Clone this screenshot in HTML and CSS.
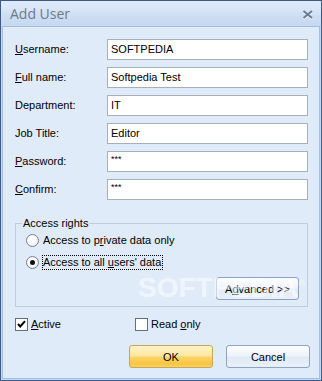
FILE: index.html
```html
<!DOCTYPE html>
<html>
<head>
<meta charset="utf-8">
<link rel="stylesheet" href="styles.css">
</head>
<body>
<div class="window">
  <div class="titlebar">
    <span class="title">Add User</span>
    <svg class="close" width="12" height="10" viewBox="0 0 12 10">
      <path d="M1.5 2 L10 9 M10 2 L1.5 9" stroke="#ffffff" stroke-width="2" fill="none" opacity="0.7"/>
      <path d="M1.5 1 L10 8 M10 1 L1.5 8" stroke="#6c7c93" stroke-width="2" fill="none"/>
    </svg>
  </div>
  <div class="client">
    <div class="form">
      <label class="lbl"><u>U</u>sername:</label><div class="box">SOFTPEDIA</div>
      <label class="lbl"><u>F</u>ull name:</label><div class="box">Softpedia Test</div>
      <label class="lbl">Department:</label><div class="box">IT</div>
      <label class="lbl">Job Title:</label><div class="box">Editor</div>
      <label class="lbl"><u>P</u>assword:</label><div class="box pw">***</div>
      <label class="lbl"><u>C</u>onfirm:</label><div class="box pw">***</div>
    </div>
    <div class="group">
      <span class="group-title">Access rights</span>
      <div class="radio-row"><span class="radio"></span><span class="rlabel">Access to p<u>r</u>ivate data only</span></div>
      <div class="radio-row second"><span class="radio checked"></span><span class="rlabel focus">Access to all <u>u</u>sers' data</span></div>
      <div class="adv-row"><button class="btn adv">A<u>d</u>vanced &gt;&gt;</button></div>
    </div>
    <div class="checks">
      <div class="check-item first"><span class="checkbox"><svg width="11" height="11" viewBox="0 0 11 11"><path d="M2 5 L4.3 7.5 L9 2.2" stroke="#000" stroke-width="2" fill="none"/></svg></span><span><u>A</u>ctive</span></div>
      <div class="check-item"><span class="checkbox"></span><span>Read <u>o</u>nly</span></div>
    </div>
    <div class="buttons">
      <button class="btn ok">OK</button>
      <button class="btn cancel">Cancel</button>
    </div>
  </div>
  <div class="watermark">SOFTPEDIA<span class="reg">®</span></div>
</div>
</body>
</html>
```
FILE: styles.css
```css
body {
  margin: 0;
  font: 11px "Liberation Sans", Arial, sans-serif;
  color: #000;
}
.window {
  width: 322px;
  height: 381px;
  box-sizing: border-box;
  border: 1px solid #3b5b87;
  background: #c6d9f1;
  display: flex;
  flex-direction: column;
  position: relative;
  overflow: hidden;
}
.titlebar {
  height: 25px;
  flex: none;
  display: flex;
  align-items: center;
  justify-content: space-between;
  padding: 0 7px 0 9px;
  background: linear-gradient(#e1ecfa, #d7e5f7 35%, #cddef3 60%, #c6d9f1);
}
.title {
  font: 14px "Open Sans", "Liberation Sans", sans-serif;
  color: #6f7a8b;
  line-height: 20px;
}
.close {
  margin-top: 2px;
}
.client {
  flex: 1;
  margin: 0 1px 1px;
  border: 1px solid #a0bee6;
  background: #e0ebfa;
  padding: 12px 0 0 12px;
}
.form {
  display: grid;
  grid-template-columns: 92px 201px;
  grid-auto-rows: 21px;
  row-gap: 7px;
  align-items: center;
}
.lbl {
  line-height: 13px;
}
.box {
  height: 21px;
  box-sizing: border-box;
  border: 1px solid #a9afb8;
  background: #fff;
  padding-left: 3px;
  line-height: 19px;
  white-space: nowrap;
}
.box.pw {
  font-size: 9px;
  line-height: 14px;
}
.group {
  margin-top: 23px;
  width: 293px;
  box-sizing: border-box;
  border: 1px solid #c3ccd8;
  padding: 0 8px 6px 0;
}
.group-title {
  display: table;
  margin: -7px 0 0 6px;
  padding: 0 1px;
  background: #e0ebfa;
  line-height: 13px;
}
.radio-row {
  display: flex;
  align-items: center;
  height: 15px;
  margin: 3px 0 0 10px;
}
.radio-row.second {
  margin-top: 7px;
}
.radio {
  width: 13px;
  height: 13px;
  box-sizing: border-box;
  border-radius: 50%;
  border: 1px solid #76818f;
  background: radial-gradient(circle at 40% 35%, #ffffff 30%, #e2e4e8 100%);
  margin-right: 3px;
  position: relative;
  flex: none;
}
.radio.checked::after {
  content: "";
  position: absolute;
  left: 3px;
  top: 3px;
  width: 5px;
  height: 5px;
  border-radius: 50%;
  background: #111;
}
.rlabel {
  border: 1px dotted transparent;
  line-height: 13px;
  padding-right: 1px;
}
.rlabel.focus {
  border-color: #000;
}
.adv-row {
  display: flex;
  justify-content: flex-end;
  margin-top: 7px;
}
.btn {
  height: 23px;
  box-sizing: border-box;
  font: inherit;
  color: #000;
  border-radius: 3px;
  padding: 0;
  line-height: 20px;
}
.adv {
  width: 83px;
  border: 1px solid #8aa3c6;
  background: linear-gradient(#fbfdff, #eef3fa 48%, #e1e9f5 52%, #e9f0fa);
}
.checks {
  display: flex;
  margin-top: 10px;
  height: 14px;
  align-items: center;
}
.check-item {
  display: flex;
  align-items: center;
}
.check-item.first {
  width: 120px;
}
.checkbox {
  width: 13px;
  height: 13px;
  box-sizing: border-box;
  border: 1px solid #646f7c;
  background: #fff;
  margin-right: 3px;
  display: flex;
  align-items: center;
  justify-content: center;
  flex: none;
}
.buttons {
  display: flex;
  justify-content: flex-end;
  gap: 13px;
  width: 295px;
  margin-top: 14px;
}
.ok {
  width: 84px;
  border: 1px solid #c9a657;
  background: linear-gradient(#fff4c8, #fde7a3 45%, #fbd467 55%, #f7c540 85%, #f9d26a);
}
.cancel {
  width: 84px;
  border: 1px solid #8aa3c6;
  background: linear-gradient(#fbfdff, #eef3fa 48%, #e1e9f5 52%, #e9f0fa);
}
.watermark {
  position: absolute;
  left: 137px;
  top: 273px;
  font: bold 28px/28px "Liberation Sans", Arial, sans-serif;
  color: rgba(255, 255, 255, 0.55);
  pointer-events: none;
}
.watermark .reg {
  font-size: 9px;
  vertical-align: top;
  position: relative;
  top: -4px;
}
```
